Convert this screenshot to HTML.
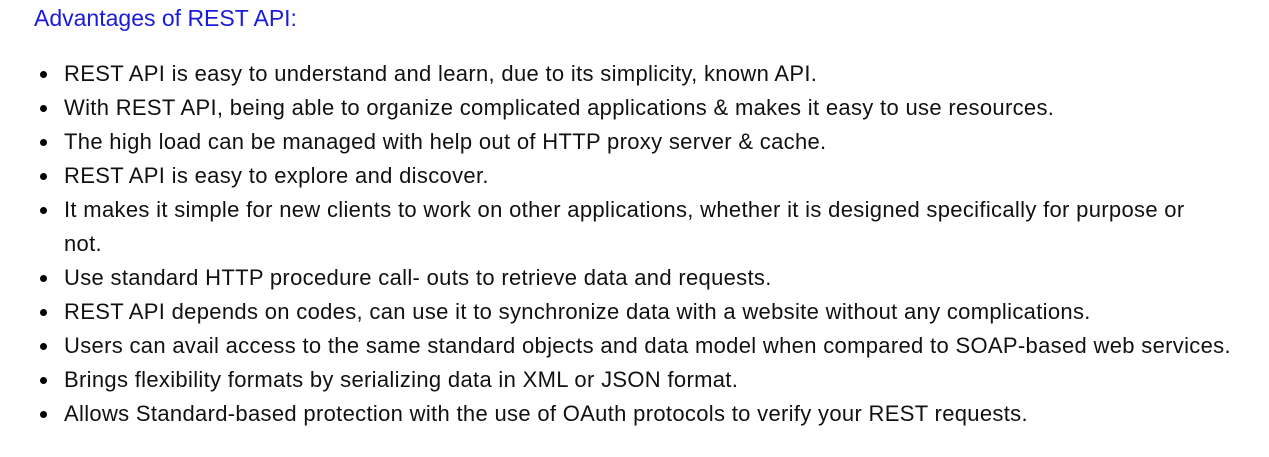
<!DOCTYPE html>
<html><head><style>
body{margin:0;background:#fff;width:1269px;height:457px;overflow:hidden;font-family:"Liberation Sans",sans-serif;}
h2{position:absolute;left:34px;top:4px;margin:0;font-weight:normal;font-size:23px;color:#1a1adc;line-height:28px;}
ul{position:absolute;left:0;top:57px;margin:0;padding:0;list-style:none;}
li{position:relative;padding-left:64px;font-size:22px;line-height:34px;color:#111;white-space:nowrap;letter-spacing:0.32px;}
li:before{content:"";position:absolute;left:40px;top:14px;width:7px;height:7px;border-radius:50%;background:#000;}
</style></head><body>
<h2>Advantages of REST API:</h2>
<ul>
<li>REST API is easy to understand and learn, due to its simplicity, known API.</li>
<li>With REST API, being able to organize complicated applications &amp; makes it easy to use resources.</li>
<li>The high load can be managed with help out of HTTP proxy server &amp; cache.</li>
<li>REST API is easy to explore and discover.</li>
<li>It makes it simple for new clients to work on other applications, whether it is designed specifically for purpose or<br>not.</li>
<li>Use standard HTTP procedure call- outs to retrieve data and requests.</li>
<li>REST API depends on codes, can use it to synchronize data with a website without any complications.</li>
<li>Users can avail access to the same standard objects and data model when compared to SOAP-based web services.</li>
<li>Brings flexibility formats by serializing data in XML or JSON format.</li>
<li>Allows Standard-based protection with the use of OAuth protocols to verify your REST requests.</li>
</ul>
</body></html>
